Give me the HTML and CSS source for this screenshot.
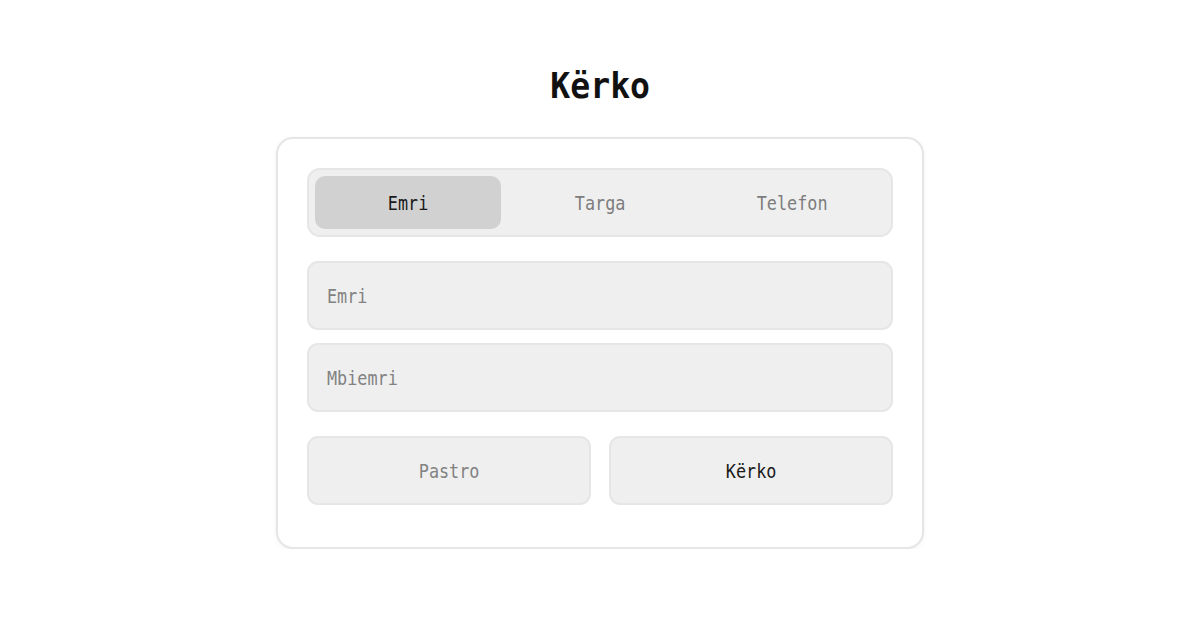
FILE: index.html
```html
<!DOCTYPE html>
<html lang="sq">
<head>
<meta charset="utf-8">
<title>Kërko</title>
<link rel="stylesheet" href="styles.css">
</head>
<body>
<main class="page">
  <h1 class="title"><span class="sq-title">Kërko</span></h1>
  <section class="card">
    <div class="tabs">
      <div class="tab active"><span class="sq">Emri</span></div>
      <div class="tab"><span class="sq">Targa</span></div>
      <div class="tab"><span class="sq">Telefon</span></div>
    </div>
    <div class="fields">
      <div class="field"><span class="sq">Emri</span></div>
      <div class="field"><span class="sq">Mbiemri</span></div>
    </div>
    <div class="actions">
      <div class="btn btn-clear"><span class="sq">Pastro</span></div>
      <div class="btn btn-search"><span class="sq">Kërko</span></div>
    </div>
  </section>
</main>
</body>
</html>
```
FILE: styles.css
```css
html, body {
  margin: 0;
  padding: 0;
  background: #ffffff;
}

body {
  font-family: "DejaVu Sans Mono", "Liberation Mono", monospace;
  color: #1a1a1a;
}

.page {
  display: flex;
  flex-direction: column;
  align-items: center;
  padding-top: 64px;
}

.title {
  margin: 0 0 30px;
  font-size: 36px;
  line-height: 43px;
  font-weight: 700;
  color: #111111;
}

.sq-title {
  display: inline-block;
  transform: scaleX(0.92);
}

.sq {
  display: inline-block;
  transform: scaleX(0.84);
}

.card {
  box-sizing: border-box;
  width: 648px;
  padding: 29px 29px 42px;
  border: 2px solid #e6e6e6;
  border-radius: 17px;
  background: #ffffff;
  box-shadow: 0 1px 4px rgba(0, 0, 0, 0.06);
}

.tabs {
  box-sizing: border-box;
  height: 69px;
  display: grid;
  grid-template-columns: repeat(3, 1fr);
  gap: 6px;
  padding: 6px;
  border: 2px solid #e6e6e6;
  border-radius: 13px;
  background: #efefef;
}

.tab {
  display: flex;
  align-items: center;
  justify-content: center;
  border-radius: 10px;
  font-size: 20px;
  color: #7d7d7d;
}

.tab.active {
  background: #d1d1d1;
  color: #1a1a1a;
}

.fields {
  display: flex;
  flex-direction: column;
  gap: 13px;
  margin-top: 24px;
}

.field {
  box-sizing: border-box;
  height: 69px;
  display: flex;
  align-items: center;
  padding: 0 18px;
  border: 2px solid #e6e6e6;
  border-radius: 11px;
  background: #efefef;
  font-size: 20px;
  color: #828282;
}

.field .sq {
  transform-origin: left center;
}

.actions {
  display: grid;
  grid-template-columns: 1fr 1fr;
  gap: 18px;
  margin-top: 24px;
}

.btn {
  box-sizing: border-box;
  height: 69px;
  display: flex;
  align-items: center;
  justify-content: center;
  border: 2px solid #e6e6e6;
  border-radius: 11px;
  background: #efefef;
  font-size: 20px;
}

.btn-clear {
  color: #828282;
}

.btn-search {
  color: #1a1a1a;
}
```
